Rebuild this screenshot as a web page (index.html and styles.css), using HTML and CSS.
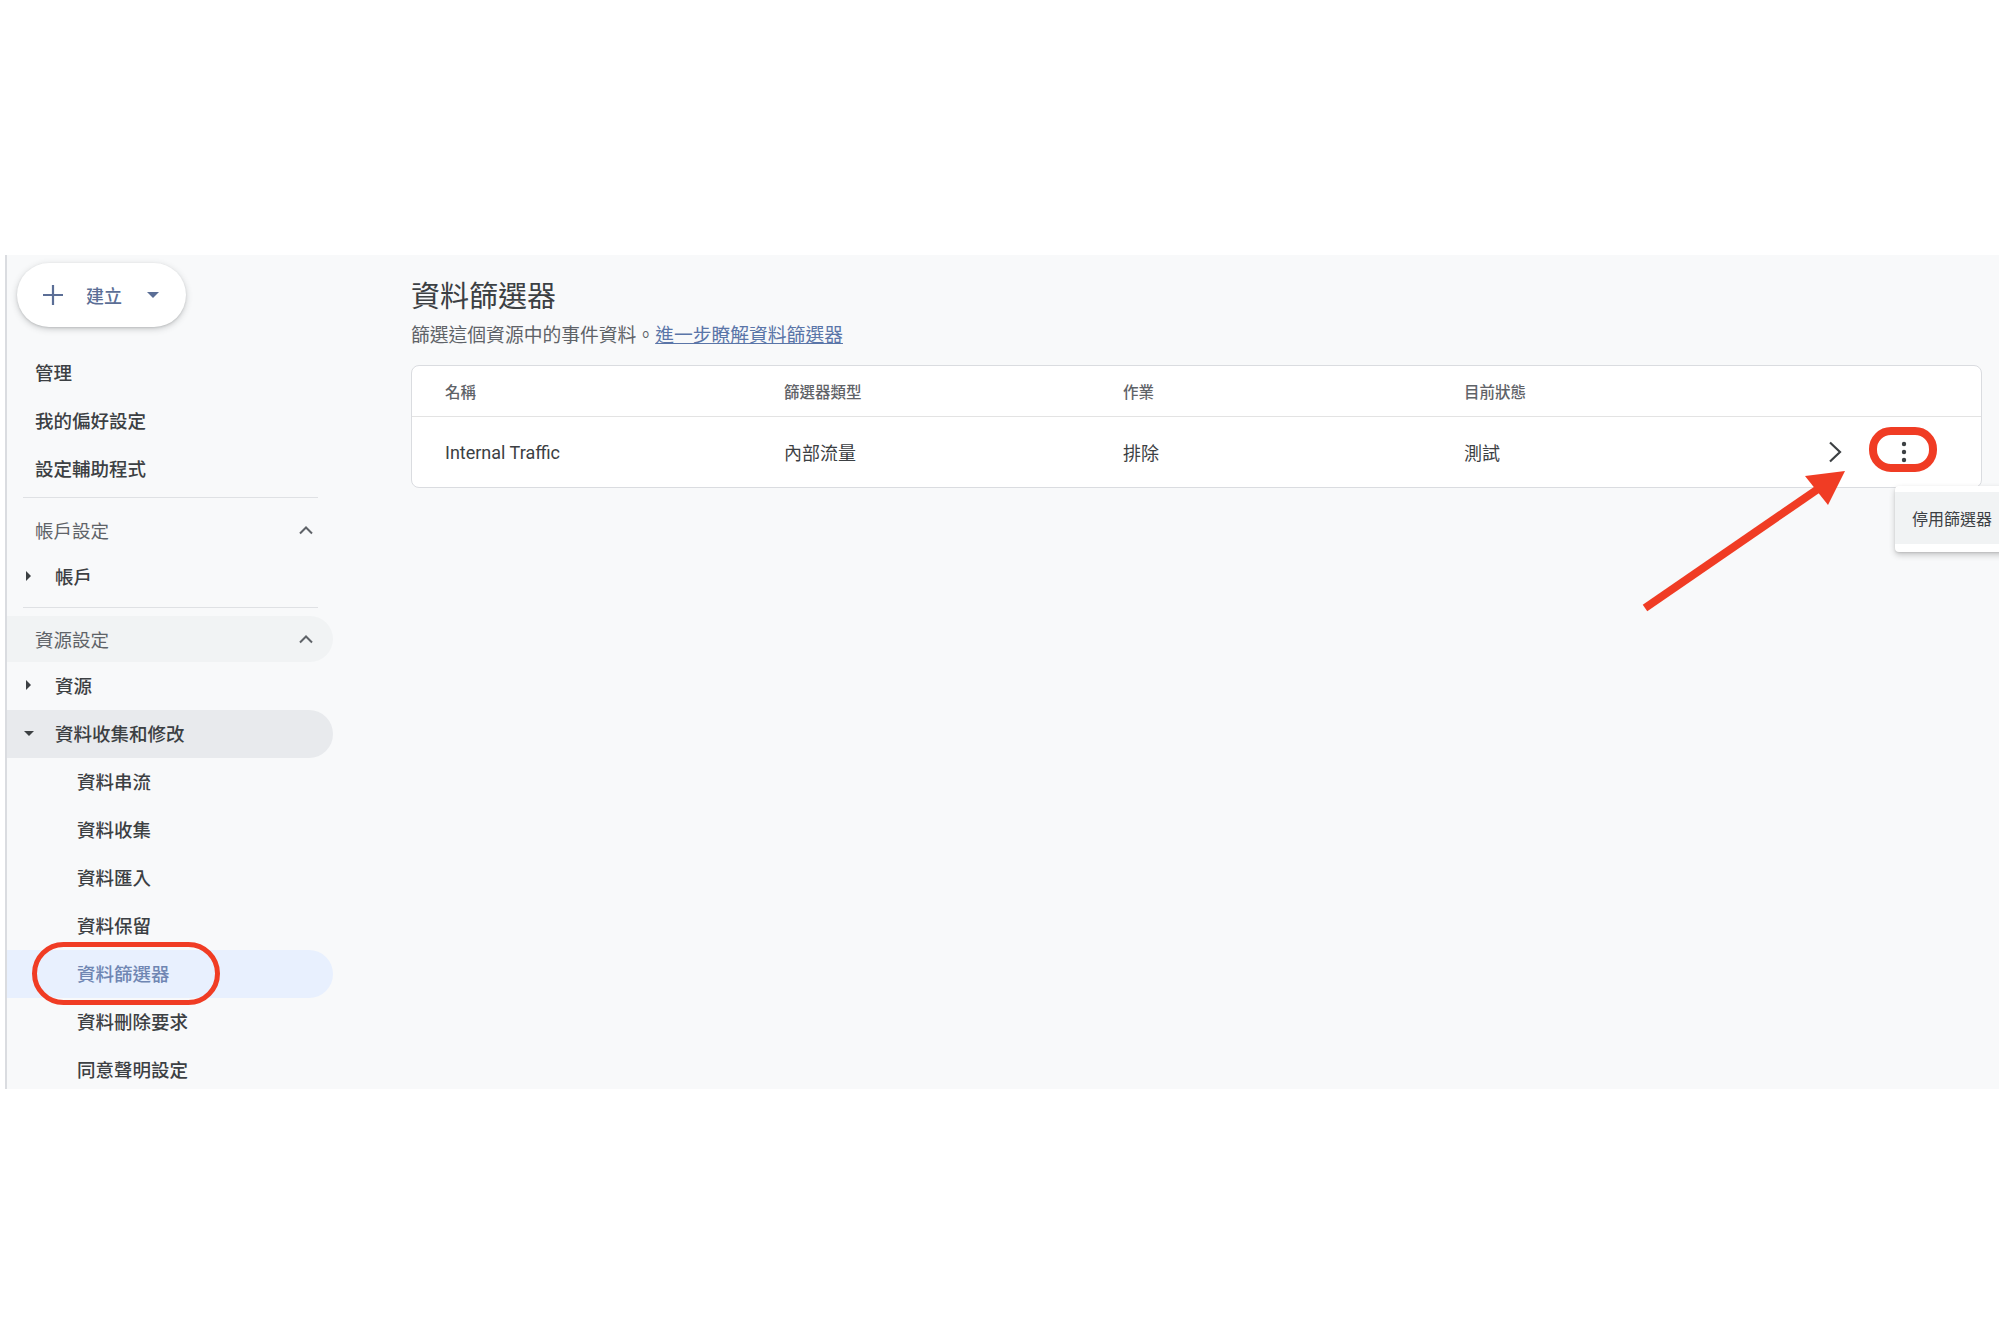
FILE: index.html
```html
<!DOCTYPE html>
<html lang="zh-Hant">

<head>
    <meta charset="UTF-8">
    <meta name="viewport" content="width=device-width, initial-scale=1.0">
    <title>資料篩選器</title>
    <link rel="stylesheet" href="styles.css">
</head>

<body>
    <div class="app">
        <aside class="sidebar">
            <button class="create-btn">
                <svg class="plus" width="22" height="22" viewBox="0 0 22 22">
                    <path d="M11 1v20M1 11h20" stroke="currentColor" stroke-width="2.2" fill="none" />
                </svg>
                <span>建立</span>
                <span class="drop"></span>
            </button>

            <nav class="nav">
                <div class="nav-item first">管理</div>
                <div class="nav-item">我的偏好設定</div>
                <div class="nav-item">設定輔助程式</div>

                <div class="divider"></div>

                <div class="section">
                    <span>帳戶設定</span>
                    <svg class="up" width="16" height="10" viewBox="0 0 16 10">
                        <polyline points="2,8.5 8,2.5 14,8.5" stroke="currentColor" stroke-width="2" fill="none" />
                    </svg>
                </div>
                <div class="nav-item sub"><span class="tri right"></span>帳戶</div>

                <div class="divider second"></div>

                <div class="section shaded">
                    <span>資源設定</span>
                    <svg class="up" width="16" height="10" viewBox="0 0 16 10">
                        <polyline points="2,8.5 8,2.5 14,8.5" stroke="currentColor" stroke-width="2" fill="none" />
                    </svg>
                </div>
                <div class="nav-item sub"><span class="tri right"></span>資源</div>
                <div class="nav-item sub open"><span class="tri down"></span>資料收集和修改</div>
                <div class="nav-item leaf">資料串流</div>
                <div class="nav-item leaf">資料收集</div>
                <div class="nav-item leaf">資料匯入</div>
                <div class="nav-item leaf">資料保留</div>
                <div class="nav-item leaf active">
                    資料篩選器
                    <span class="mark mark-nav"></span>
                </div>
                <div class="nav-item leaf">資料刪除要求</div>
                <div class="nav-item leaf">同意聲明設定</div>
            </nav>
        </aside>

        <main class="main">
            <h1>資料篩選器</h1>
            <p class="lead">篩選這個資源中的事件資料。<a href="#">進一步瞭解資料篩選器</a></p>

            <div class="card">
                <div class="row head">
                    <div>名稱</div>
                    <div>篩選器類型</div>
                    <div>作業</div>
                    <div>目前狀態</div>
                </div>
                <div class="row">
                    <div class="latin">Internal Traffic</div>
                    <div>內部流量</div>
                    <div>排除</div>
                    <div>測試</div>
                    <div class="actions">
                        <svg class="chev" width="16" height="22" viewBox="0 0 16 22">
                            <polyline points="3,1.5 13,11 3,20.5" stroke="#3c4043" stroke-width="2.2" fill="none" />
                        </svg>
                        <div class="kebab">
                            <svg width="6" height="22" viewBox="0 0 6 22">
                                <circle cx="3" cy="3" r="2.2" fill="#3c4043" />
                                <circle cx="3" cy="11" r="2.2" fill="#3c4043" />
                                <circle cx="3" cy="19" r="2.2" fill="#3c4043" />
                            </svg>
                            <span class="mark mark-kebab"></span>
                            <div class="menu">
                                <div class="menu-item">停用篩選器</div>
                            </div>
                        </div>
                    </div>
                </div>
            </div>

            <!-- red annotation arrow pointing at the row actions -->
            <svg class="arrow" width="230" height="160" viewBox="0 0 230 160">
                <line x1="15" y1="148" x2="188" y2="29" stroke="#f03c24" stroke-width="8" />
                <polygon points="215,11 175,16 198,45" fill="#f03c24" />
            </svg>
        </main>
    </div>
</body>

</html>
```

FILE: styles.css
```css
body {
    margin: 0;
    padding-top: 255px;
    background-color: #fff;
    font-family: Roboto, "Noto Sans CJK TC", sans-serif;
    color: #3c4043;
    overflow: hidden;
}

.app {
    position: relative;
    display: flex;
    height: 834px;
    margin-left: 5px;
    border-left: 2px solid #dadce0;
    background-color: #f8f9fa;
    overflow: hidden;
}

/* sidebar */

.sidebar {
    width: 326px;
    flex-shrink: 0;
    padding-top: 8px;
}

.create-btn {
    display: flex;
    align-items: center;
    height: 64px;
    width: 169px;
    margin-left: 10px;
    padding: 0 0 0 25px;
    border: none;
    border-radius: 32px;
    background-color: #fff;
    box-shadow: 0 2px 6px rgba(60, 64, 67, 0.25), 0 1px 2px rgba(60, 64, 67, 0.15);
    color: #5b6e96;
    font-family: inherit;
    font-size: 18px;
    font-weight: 500;
    cursor: pointer;
}

.create-btn .plus {
    margin-right: 22px;
}

.create-btn .drop {
    width: 0;
    height: 0;
    margin-left: 25px;
    border-left: 6px solid transparent;
    border-right: 6px solid transparent;
    border-top: 6px solid #5b6e96;
}

.nav {
    font-size: 18.5px;
}

.nav-item {
    position: relative;
    display: flex;
    align-items: center;
    height: 48px;
    padding-left: 28px;
    padding-bottom: 3px;
    box-sizing: border-box;
    font-weight: 500;
    color: #3c4043;
}

.nav-item.first {
    margin-top: 22px;
}

.nav-item.sub {
    padding-left: 17px;
}

.nav-item.leaf {
    padding-left: 70px;
}

.nav-item.open {
    background-color: #e8eaed;
    border-radius: 0 24px 24px 0;
}

.nav-item.active {
    background-color: #e8f0fe;
    border-radius: 0 24px 24px 0;
    color: #6f86b3;
}

.tri {
    display: inline-block;
    width: 31px;
    position: relative;
    height: 10px;
}

.tri::before {
    content: "";
    position: absolute;
    top: 0;
    left: 0;
    border: 5px solid transparent;
}

.tri.right::before {
    left: 2px;
    border-left: 5px solid #3c4043;
    border-right: none;
}

.tri.down::before {
    top: 3px;
    border-top: 5px solid #3c4043;
    border-bottom: none;
}

.divider {
    height: 1px;
    margin: 4px 15px 9px 16px;
    background-color: #dfe1e4;
}

.divider.second {
    margin-top: 6px;
    margin-bottom: 8px;
}

.section {
    display: flex;
    align-items: center;
    justify-content: space-between;
    height: 46px;
    padding: 0 19px 0 28px;
    color: #5f6368;
}

.section.shaded {
    background-color: #f1f3f4;
    border-radius: 0 23px 23px 0;
}

.section .up {
    color: #5f6368;
}

/* red annotation marks */

.mark {
    position: absolute;
    box-sizing: border-box;
    border: 5px solid #f03c24;
    pointer-events: none;
}

.mark-nav {
    left: 25px;
    top: -8px;
    width: 188px;
    height: 63px;
    border-radius: 32px;
}

.mark-kebab {
    left: -15px;
    top: -5px;
    width: 68px;
    height: 45px;
    border-width: 8px;
    border-radius: 22px;
}

/* main content */

.main {
    position: relative;
    flex: 1;
    padding: 24px 17px 0 78px;
}

h1 {
    margin: 0;
    font-size: 29px;
    line-height: 36px;
    font-weight: 400;
    color: #3c4043;
}

.lead {
    margin: 8px 0 0;
    font-size: 18.8px;
    line-height: 26px;
    color: #5f6368;
}

.lead a {
    color: #5a75a8;
}

.card {
    margin-top: 16px;
    background-color: #fff;
    border: 1px solid #dadce0;
    border-radius: 8px;
}

.row {
    display: grid;
    grid-template-columns: 339px 339px 341px 1fr auto;
    align-items: center;
    height: 70px;
    padding-left: 33px;
    font-size: 18px;
}

.row.head {
    height: 50px;
    border-bottom: 1px solid #e3e3e3;
    font-size: 15.5px;
    font-weight: 500;
    color: #5f6368;
}

.latin {
    font-size: 18px;
}

.actions {
    display: flex;
    align-items: center;
    padding-right: 57px;
}

.chev {
    margin-right: 41px;
}

.kebab {
    position: relative;
    display: flex;
    align-items: center;
    justify-content: center;
    width: 40px;
    height: 40px;
}

.menu {
    position: absolute;
    left: 11px;
    top: 54px;
    width: 150px;
    padding: 6px 0 8px;
    background-color: #fff;
    box-shadow: 0 3px 6px rgba(0, 0, 0, 0.2), 0 1px 2px rgba(0, 0, 0, 0.1);
    border-radius: 4px 0 0 4px;
    z-index: 2;
}

.menu-item {
    display: flex;
    align-items: center;
    height: 52px;
    padding-left: 17px;
    background-color: #f1f3f4;
    font-size: 16px;
    color: #3c4043;
    white-space: nowrap;
}

.arrow {
    position: absolute;
    left: 1297px;
    top: 205px;
}
```
